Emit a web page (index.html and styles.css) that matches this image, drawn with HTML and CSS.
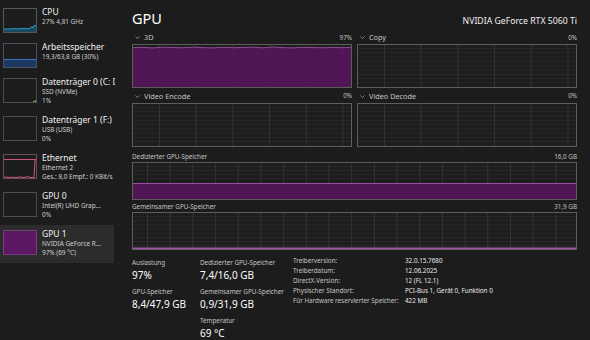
FILE: index.html
```html
<!DOCTYPE html>
<html>

<head>
    <title>Task-Manager - GPU</title>
    <link rel="stylesheet" href="styles.css">
</head>

<body>

    <div class="app">

        <!-- Resource list -->
        <div class="sidebar">
            <div class="item two">
                <svg class="thumb" viewBox="0 0 34 25">
                    <polygon points="1,21 6,21 11,20.6 16,21 20,20.4 24,20.8 27,20.2 29,18.5 30,20 31,17.5 33,17.5 33,24 1,24" fill="#17485b" />
                    <polyline points="1,21 6,21 11,20.6 16,21 20,20.4 24,20.8 27,20.2 29,18.5 30,20 31,17.5 33,17.5" fill="none" stroke="#2d9cc7" stroke-width="1" />
                    <rect x="0.5" y="0.5" width="33" height="24" fill="none" stroke="#4f5a5e" />
                </svg>
                <div class="info">
                    <div class="name">CPU</div>
                    <div class="sub">27% 4,81 GHz</div>
                </div>
            </div>
            <div class="item two">
                <svg class="thumb" viewBox="0 0 34 25">
                    <rect x="1" y="16.5" width="32" height="7.5" fill="#1b3762" />
                    <line x1="1" y1="16.5" x2="33" y2="16.5" stroke="#3b70c0" />
                    <rect x="0.5" y="0.5" width="33" height="24" fill="none" stroke="#4b5260" />
                </svg>
                <div class="info">
                    <div class="name">Arbeitsspeicher</div>
                    <div class="sub">19,3/63,8 GB (30%)</div>
                </div>
            </div>
            <div class="item">
                <svg class="thumb" viewBox="0 0 34 25">
                    <line x1="30" y1="23.5" x2="33" y2="23.5" stroke="#6aa83c" />
                    <line x1="32.5" y1="22" x2="32.5" y2="24" stroke="#6aa83c" />
                    <rect x="0.5" y="0.5" width="33" height="24" fill="none" stroke="#4d4d4d" />
                </svg>
                <div class="info">
                    <div class="name">Datenträger 0 (C: D:)</div>
                    <div class="sub">SSD (NVMe)</div>
                    <div class="sub">1%</div>
                </div>
            </div>
            <div class="item">
                <svg class="thumb" viewBox="0 0 34 25">
                    <rect x="0.5" y="0.5" width="33" height="24" fill="none" stroke="#4d4d4d" />
                </svg>
                <div class="info">
                    <div class="name">Datenträger 1 (F:)</div>
                    <div class="sub">USB (USB)</div>
                    <div class="sub">0%</div>
                </div>
            </div>
            <div class="item">
                <svg class="thumb" viewBox="0 0 34 25">
                    <line x1="1" y1="5.5" x2="33" y2="5.5" stroke="#c9547f" />
                    <polyline points="1,23.5 3,22.8 5,23.5 9,23.2 13,23.5 17,23 21,23.5 25,22.6 27,23.5 31,23.5 32,6 33,6" fill="none" stroke="#c9547f" />
                    <rect x="0.5" y="0.5" width="33" height="24" fill="none" stroke="#6a4b57" />
                </svg>
                <div class="info">
                    <div class="name">Ethernet</div>
                    <div class="sub">Ethernet 2</div>
                    <div class="sub">Ges.: 8,0 Empf.: 0 KBit/s</div>
                </div>
            </div>
            <div class="item">
                <svg class="thumb" viewBox="0 0 34 25">
                    <rect x="0.5" y="0.5" width="33" height="24" fill="none" stroke="#4d4d4d" />
                </svg>
                <div class="info">
                    <div class="name">GPU 0</div>
                    <div class="sub">Intel(R) UHD Grap...</div>
                    <div class="sub">0%</div>
                </div>
            </div>
            <div class="item active">
                <svg class="thumb" viewBox="0 0 34 25">
                    <rect x="1" y="1.5" width="32" height="22.5" fill="#5c1862" />
                    <rect x="0.5" y="0.5" width="33" height="24" fill="none" stroke="#7a3d80" />
                </svg>
                <div class="info">
                    <div class="name">GPU 1</div>
                    <div class="sub">NVIDIA GeForce R...</div>
                    <div class="sub">97% (69 °C)</div>
                </div>
            </div>
        </div>

        <!-- Detail panel -->
        <div class="main">
            <div class="header">
                <h1>GPU</h1>
                <span class="model">NVIDIA GeForce RTX 5060 Ti</span>
            </div>

            <div class="engines">
                <div class="engine">
                    <div class="caption">
                        <span><svg class="chev" viewBox="0 0 5 3"><polyline points="0.5,0.5 2.5,2.5 4.5,0.5" /></svg>3D</span>
                        <span class="pct">97%</span>
                    </div>
                    <div class="plot grid-a">
                        <svg viewBox="0 0 218 42" preserveAspectRatio="none">
                            <polygon points="0,2.6 10,2.4 20,2.9 30,2.2 40,2.5 50,2.8 60,2.1 70,2.6 80,2.9 90,2.3 100,2.7 110,2.4 120,2.2 130,2.8 140,2.0 150,2.6 160,2.9 170,2.3 180,2.5 190,2.8 200,2.4 210,2.7 218,2.3 218,42 0,42" fill="#5a1460" fill-opacity="0.82" />
                            <polyline points="0,2.6 10,2.4 20,2.9 30,2.2 40,2.5 50,2.8 60,2.1 70,2.6 80,2.9 90,2.3 100,2.7 110,2.4 120,2.2 130,2.8 140,2.0 150,2.6 160,2.9 170,2.3 180,2.5 190,2.8 200,2.4 210,2.7 218,2.3" fill="none" stroke="#8d4c94" stroke-width="1" />
                        </svg>
                    </div>
                </div>
                <div class="engine">
                    <div class="caption">
                        <span><svg class="chev" viewBox="0 0 5 3"><polyline points="0.5,0.5 2.5,2.5 4.5,0.5" /></svg>Copy</span>
                        <span class="pct">0%</span>
                    </div>
                    <div class="plot grid-a"></div>
                </div>
                <div class="engine">
                    <div class="caption">
                        <span><svg class="chev" viewBox="0 0 5 3"><polyline points="0.5,0.5 2.5,2.5 4.5,0.5" /></svg>Video Encode</span>
                        <span class="pct">0%</span>
                    </div>
                    <div class="plot grid-a"></div>
                </div>
                <div class="engine">
                    <div class="caption">
                        <span><svg class="chev" viewBox="0 0 5 3"><polyline points="0.5,0.5 2.5,2.5 4.5,0.5" /></svg>Video Decode</span>
                        <span class="pct">0%</span>
                    </div>
                    <div class="plot grid-a"></div>
                </div>
            </div>

            <div class="memory">
                <div class="mem-caption first">
                    <span>Dedizierter GPU-Speicher</span>
                    <span>16,0 GB</span>
                </div>
                <div class="plot mem grid-b">
                    <svg viewBox="0 0 443 36" preserveAspectRatio="none">
                        <rect x="0" y="20.5" width="443" height="15.5" fill="#5a1460" fill-opacity="0.82" />
                        <line x1="0" y1="20.5" x2="443" y2="20.5" stroke="#9a4ea2" stroke-width="1" />
                    </svg>
                </div>
                <div class="mem-caption">
                    <span>Gemeinsamer GPU-Speicher</span>
                    <span>31,9 GB</span>
                </div>
                <div class="plot mem grid-b">
                    <svg viewBox="0 0 443 36" preserveAspectRatio="none">
                        <line x1="0" y1="35.2" x2="443" y2="35.2" stroke="#a552ad" stroke-width="1.6" />
                    </svg>
                </div>
            </div>

            <div class="stats">
                <div class="col col-1">
                    <div class="label">Auslastung</div>
                    <div class="value">97%</div>
                    <div class="label">GPU-Speicher</div>
                    <div class="value">8,4/47,9 GB</div>
                </div>
                <div class="col col-2">
                    <div class="label">Dedizierter GPU-Speicher</div>
                    <div class="value">7,4/16,0 GB</div>
                    <div class="label">Gemeinsamer GPU-Speicher</div>
                    <div class="value">0,9/31,9 GB</div>
                    <div class="label">Temperatur</div>
                    <div class="value">69 °C</div>
                </div>
                <div class="details">
                    <span>Treiberversion:</span><span>32.0.15.7680</span>
                    <span>Treiberdatum:</span><span>12.06.2025</span>
                    <span>DirectX-Version:</span><span>12 (FL 12.1)</span>
                    <span>Physischer Standort:</span><span>PCI-Bus 1, Gerät 0, Funktion 0</span>
                    <span>Für Hardware reservierter Speicher:</span><span>422 MB</span>
                </div>
            </div>
        </div>

    </div>

</body>

</html>
```

FILE: styles.css
```css
body {
    margin: 0;
    background-color: #1c1c1c;
    color: #ffffff;
    font-family: 'Noto Sans', sans-serif;
}

.app {
    display: flex;
    width: 590px;
    height: 340px;
    overflow: hidden;
}

/* Resource list */
.sidebar {
    width: 115px;
    flex-shrink: 0;
    overflow: hidden;
    padding-top: 3px;
}

.item {
    display: flex;
    align-items: flex-start;
    width: 114px;
    padding: 5px 0 6px 3px;
    box-sizing: border-box;
}

.item.two {
    padding-bottom: 5px;
}

.item.active {
    background-color: #2c2c2c;
}

.thumb {
    width: 34px;
    height: 25px;
    flex-shrink: 0;
    margin-right: 5px;
}

.info {
    margin-top: -1px;
    white-space: nowrap;
}

.name {
    font-size: 8.5px;
    line-height: 10px;
    color: #f2f2f2;
}

.sub {
    font-size: 6.4px;
    line-height: 9px;
    color: #cfcfcf;
}

/* Detail panel */
.main {
    flex: 1;
    padding: 0 13px 0 17px;
}

.header {
    display: flex;
    justify-content: space-between;
    align-items: baseline;
    padding-top: 8px;
    height: 22px;
}

h1 {
    margin: 0;
    font-size: 14.5px;
    line-height: 20px;
    font-weight: normal;
    color: #ffffff;
}

.model {
    font-size: 8.7px;
    color: #f0f0f0;
}

.engines {
    display: grid;
    grid-template-columns: 1fr 1fr;
    column-gap: 5px;
}

.caption {
    display: flex;
    justify-content: space-between;
    align-items: center;
    height: 14px;
    font-size: 7.3px;
    color: #c4c4c4;
}

.engine:nth-child(n+3) .caption {
    height: 15px;
}

.caption .pct {
    font-size: 6.3px;
}

.chev {
    width: 5px;
    height: 3px;
    margin: 0 4px 1px 3px;
    vertical-align: middle;
}

.chev polyline {
    fill: none;
    stroke: #8f8f8f;
    stroke-width: 0.9;
}

.plot {
    height: 44px;
    border: 1px solid #5d5d5d;
    box-sizing: border-box;
    background-color: #1d1d1d;
}

.plot svg {
    display: block;
    width: 100%;
    height: 100%;
}

.grid-a {
    background-image:
        linear-gradient(to right, #333333 1px, transparent 1px),
        linear-gradient(to bottom, #292929 1px, transparent 1px);
    background-size: 36.7px 100%, 100% 4.3px;
    background-position: 26px 0, 0 3px;
}

.grid-b {
    background-image:
        linear-gradient(to right, #333333 1px, transparent 1px),
        linear-gradient(to bottom, #292929 1px, transparent 1px);
    background-size: 22.7px 100%, 100% 4.2px;
    background-position: 14px 0, 0 3px;
}

.plot.mem {
    height: 38px;
}

.mem-caption {
    display: flex;
    justify-content: space-between;
    align-items: flex-end;
    height: 12px;
    font-size: 6.3px;
    line-height: 10px;
    color: #c4c4c4;
}

.mem-caption.first {
    height: 15px;
}

/* Figures under the graphs */
.stats {
    display: flex;
    align-items: flex-start;
    padding-top: 7px;
}

.col-1 {
    width: 68px;
}

.col-2 {
    width: 93px;
}

.label {
    font-size: 6.3px;
    line-height: 11px;
    color: #c4c4c4;
    white-space: nowrap;
}

.value {
    font-size: 10px;
    line-height: 14px;
    color: #ffffff;
}

.value + .label {
    margin-top: 4px;
}

.details {
    display: grid;
    grid-template-columns: 112px auto;
    align-content: start;
    margin-top: -1px;
    font-size: 6.3px;
    line-height: 10px;
    color: #c4c4c4;
}

.details span:nth-child(even) {
    color: #e8e8e8;
}
```
